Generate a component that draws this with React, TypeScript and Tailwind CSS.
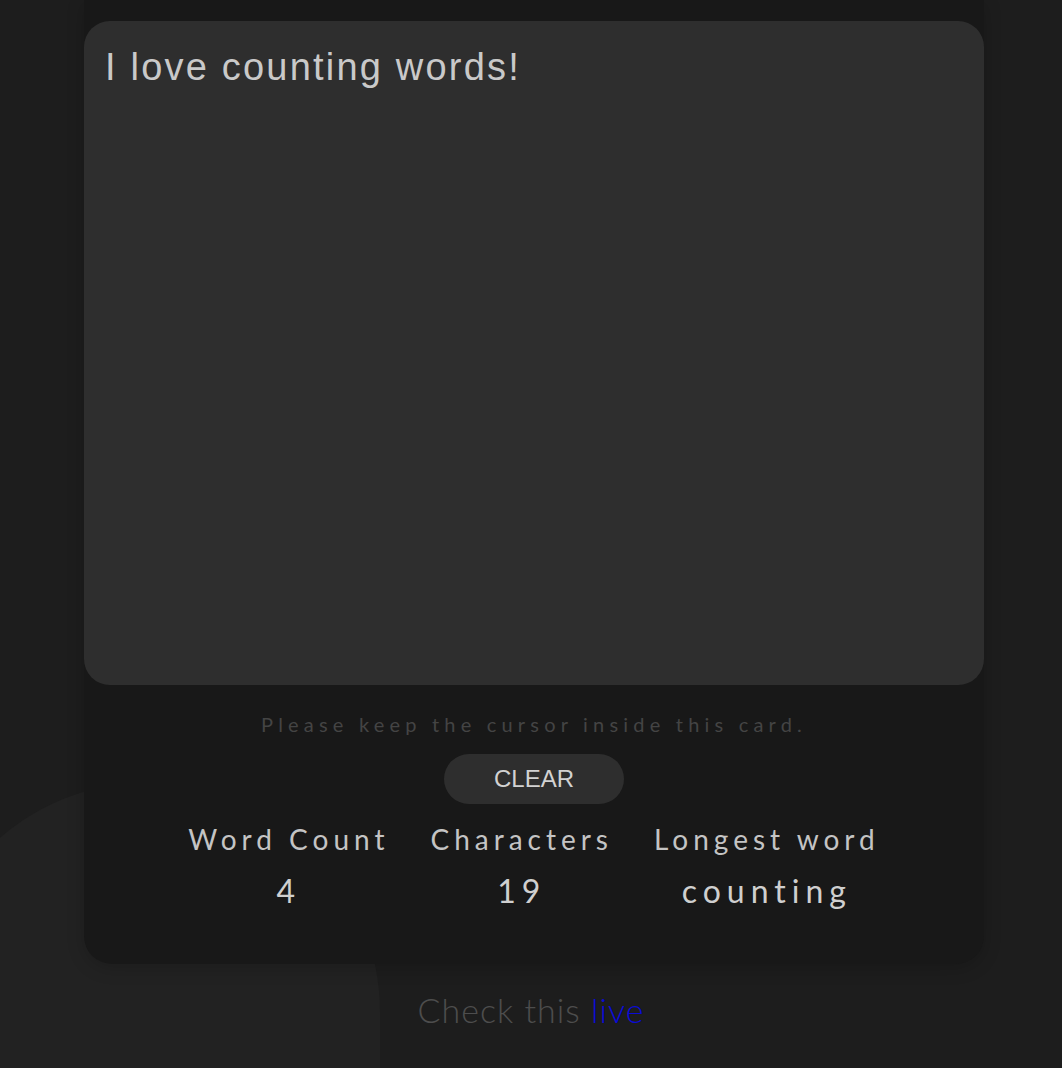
import { useState } from 'react'

const poppinsLike = { fontFamily: 'Lato, "Open Sans", sans-serif' }

function getStats(text: string) {
  const words = text.split(/\s+/).filter(Boolean)
  const characters = text.replace(/\s/g, '').length
  let longest = ''
  for (const w of words) {
    const clean = w.replace(/[^\p{L}\p{N}'-]/gu, '')
    if (clean.length > longest.length) longest = clean
  }
  return { count: words.length, characters, longest }
}

export default function App() {
  const [text, setText] = useState('I love counting words!')
  const stats = getStats(text)

  return (
    <div className="relative min-h-screen overflow-hidden bg-[#1d1d1d]">
      {/* soft background blob */}
      <div className="absolute left-[-80px] top-[782px] h-[600px] w-[460px] rounded-full bg-[#222222]" />

      <div className="relative ml-[84px] w-[900px] rounded-b-[28px] bg-[#181818] pb-[53px] pt-[21px] shadow-[0_4px_18px_rgba(0,0,0,0.18)]">
        <textarea
          value={text}
          onChange={(e) => setText(e.target.value)}
          spellCheck={false}
          className="block h-[664px] w-full resize-none rounded-[26px] bg-[#2e2e2e] px-[21px] pt-[25px] text-[38px] leading-[1.15] tracking-[2.2px] text-[#c9c9c9] outline-none"
          style={{ fontFamily: '"Liberation Sans", Arial, sans-serif' }}
        />

        <p className="mt-[27px] text-center text-[20px] leading-[24px] tracking-[5.2px] text-[#444444]" style={poppinsLike}>
          Please keep the cursor inside this card.
        </p>

        <div className="mt-[18px] flex justify-center">
          <button
            onClick={() => setText('')}
            className="h-[50px] w-[180px] rounded-full bg-[#2e2e2e] text-[24px] text-[#d2d2d2]"
            style={{ fontFamily: '"Liberation Sans", Arial, sans-serif' }}
          >
            CLEAR
          </button>
        </div>

        <div className="mt-[19px] flex justify-center gap-[41px]" style={poppinsLike}>
          <Stat label="Word Count" value={String(stats.count)} />
          <Stat label="Characters" value={String(stats.characters)} />
          <Stat label="Longest word" value={stats.longest} />
        </div>
      </div>

      <p className="relative mt-[24px] text-center text-[34px] font-light leading-[44px] tracking-[1px] text-[#4d4d4d]" style={poppinsLike}>
        Check this{' '}
        <a href="#" className="text-[#0b0bd6]">
          live
        </a>
      </p>
    </div>
  )
}

function Stat({ label, value }: { label: string; value: string }) {
  return (
    <div className="flex flex-col items-center">
      <span className="text-[28px] leading-[32px] tracking-[5px] text-[#c4c4c4]">{label}</span>
      <span className="mt-[16px] text-[32px] leading-[40px] tracking-[6px] text-[#cfcfcf]">{value}</span>
    </div>
  )
}
